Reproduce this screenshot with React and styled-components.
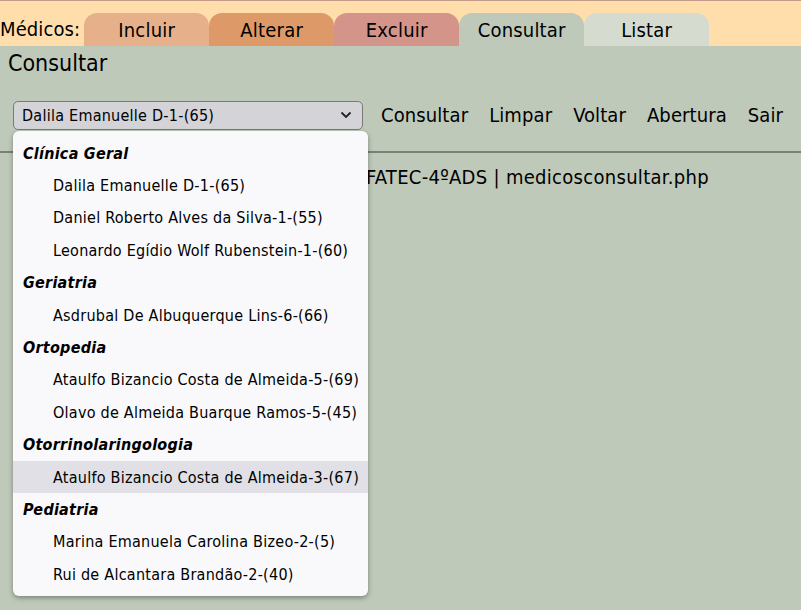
import React from "react";
import styled, { createGlobalStyle } from "styled-components";

const GlobalStyle = createGlobalStyle`
  html, body {
    margin: 0;
    padding: 0;
    background: #bec9b9;
    font-family: "DejaVu Sans Condensed", "DejaVu Sans", sans-serif;
    font-stretch: condensed;
    color: #000;
  }
`;

const Page = styled.div`
  position: relative;
  width: 801px;
  height: 610px;
  overflow: hidden;
`;

const Header = styled.div`
  display: flex;
  align-items: flex-end;
  height: 46px;
  background: #ffdeab;
  border-top: 1px solid #c39b8a;
  box-sizing: border-box;
`;

const Label = styled.span`
  font-size: 20px;
  letter-spacing: 0.1px;
  padding: 0 4px 5px 0;
`;

const Tab = styled.div`
  width: 125px;
  height: 33px;
  display: flex;
  align-items: center;
  justify-content: center;
  font-size: 20px;
  letter-spacing: 0.2px;
  border-radius: 13px 13px 0 0;
  background: ${(p) => p.$bg};
`;

const Title = styled.h1`
  margin: 0;
  padding: 4px 8px;
  font-size: 23px;
  font-weight: normal;
  line-height: 26px;
`;

const Toolbar = styled.div`
  display: flex;
  align-items: center;
  margin-top: 20px;
  padding-left: 13px;
  height: 30px;
`;

const Select = styled.div`
  width: 350px;
  height: 29px;
  box-sizing: border-box;
  display: flex;
  align-items: center;
  justify-content: space-between;
  padding: 0 10px 0 8px;
  border: 1px solid #7a7a7a;
  border-radius: 5px;
  background: #d3d3d8;
  font-size: 16px;
  letter-spacing: 0.25px;
`;

const Button = styled.span`
  font-size: 20px;
  letter-spacing: 0.1px;
  padding: 0 10.5px;
  margin-left: ${(p) => (p.$first ? "7.5px" : "0")};
`;

const Rule = styled.hr`
  margin: 21px 0 0;
  border: none;
  border-top: 2px solid #7b7f79;
`;

const Footer = styled.div`
  font-size: 20px;
  letter-spacing: 0.3px;
  padding: 12px 0 0 366px;
`;

const Menu = styled.ul`
  position: absolute;
  left: 13px;
  top: 131px;
  width: 355px;
  margin: 0;
  padding: 6px 0;
  list-style: none;
  box-sizing: border-box;
  background: #f9f9fb;
  border-radius: 6px;
  box-shadow: 0 2px 5px rgba(0, 0, 0, 0.35);
`;

const Row = styled.li`
  height: 32.4px;
  display: flex;
  align-items: center;
  font-size: 16px;
  letter-spacing: 0.25px;
  padding-left: ${(p) => (p.$group ? "10px" : "40px")};
  font-weight: ${(p) => (p.$group ? "bold" : "normal")};
  font-style: ${(p) => (p.$group ? "italic" : "normal")};
  background: ${(p) => (p.$active ? "#e0e0e6" : "transparent")};
`;

const groups = [
  ["Clínica Geral", ["Dalila Emanuelle D-1-(65)", "Daniel Roberto Alves da Silva-1-(55)", "Leonardo Egídio Wolf Rubenstein-1-(60)"]],
  ["Geriatria", ["Asdrubal De Albuquerque Lins-6-(66)"]],
  ["Ortopedia", ["Ataulfo Bizancio Costa de Almeida-5-(69)", "Olavo de Almeida Buarque Ramos-5-(45)"]],
  ["Otorrinolaringologia", ["Ataulfo Bizancio Costa de Almeida-3-(67)"]],
  ["Pediatria", ["Marina Emanuela Carolina Bizeo-2-(5)", "Rui de Alcantara Brandão-2-(40)"]],
];

const tabs = [
  ["Incluir", "#e5b08a"],
  ["Alterar", "#dd9a68"],
  ["Excluir", "#d49489"],
  ["Consultar", "#bec9b9"],
  ["Listar", "#d5dbce"],
];

export default function App() {
  return (
    <>
      <GlobalStyle />
      <Page>
        <Header>
          <Label>Médicos:</Label>
          {tabs.map(([t, bg]) => (
            <Tab key={t} $bg={bg}>{t}</Tab>
          ))}
        </Header>
        <Title>Consultar</Title>
        <Toolbar>
          <Select>
            <span>Dalila Emanuelle D-1-(65)</span>
            <svg width="12" height="8" viewBox="0 0 12 8">
              <path d="M1.5 1.5 6 6l4.5-4.5" fill="none" stroke="#222" strokeWidth="1.8" />
            </svg>
          </Select>
          <Button $first>Consultar</Button>
          <Button>Limpar</Button>
          <Button>Voltar</Button>
          <Button>Abertura</Button>
          <Button>Sair</Button>
        </Toolbar>
        <Rule />
        <Footer>FATEC-4ºADS | medicosconsultar.php</Footer>
        <Menu>
          {groups.map(([g, items]) => (
            <React.Fragment key={g}>
              <Row $group>{g}</Row>
              {items.map((it) => (
                <Row key={it} $active={it.endsWith("3-(67)")}>{it}</Row>
              ))}
            </React.Fragment>
          ))}
        </Menu>
      </Page>
    </>
  );
}
